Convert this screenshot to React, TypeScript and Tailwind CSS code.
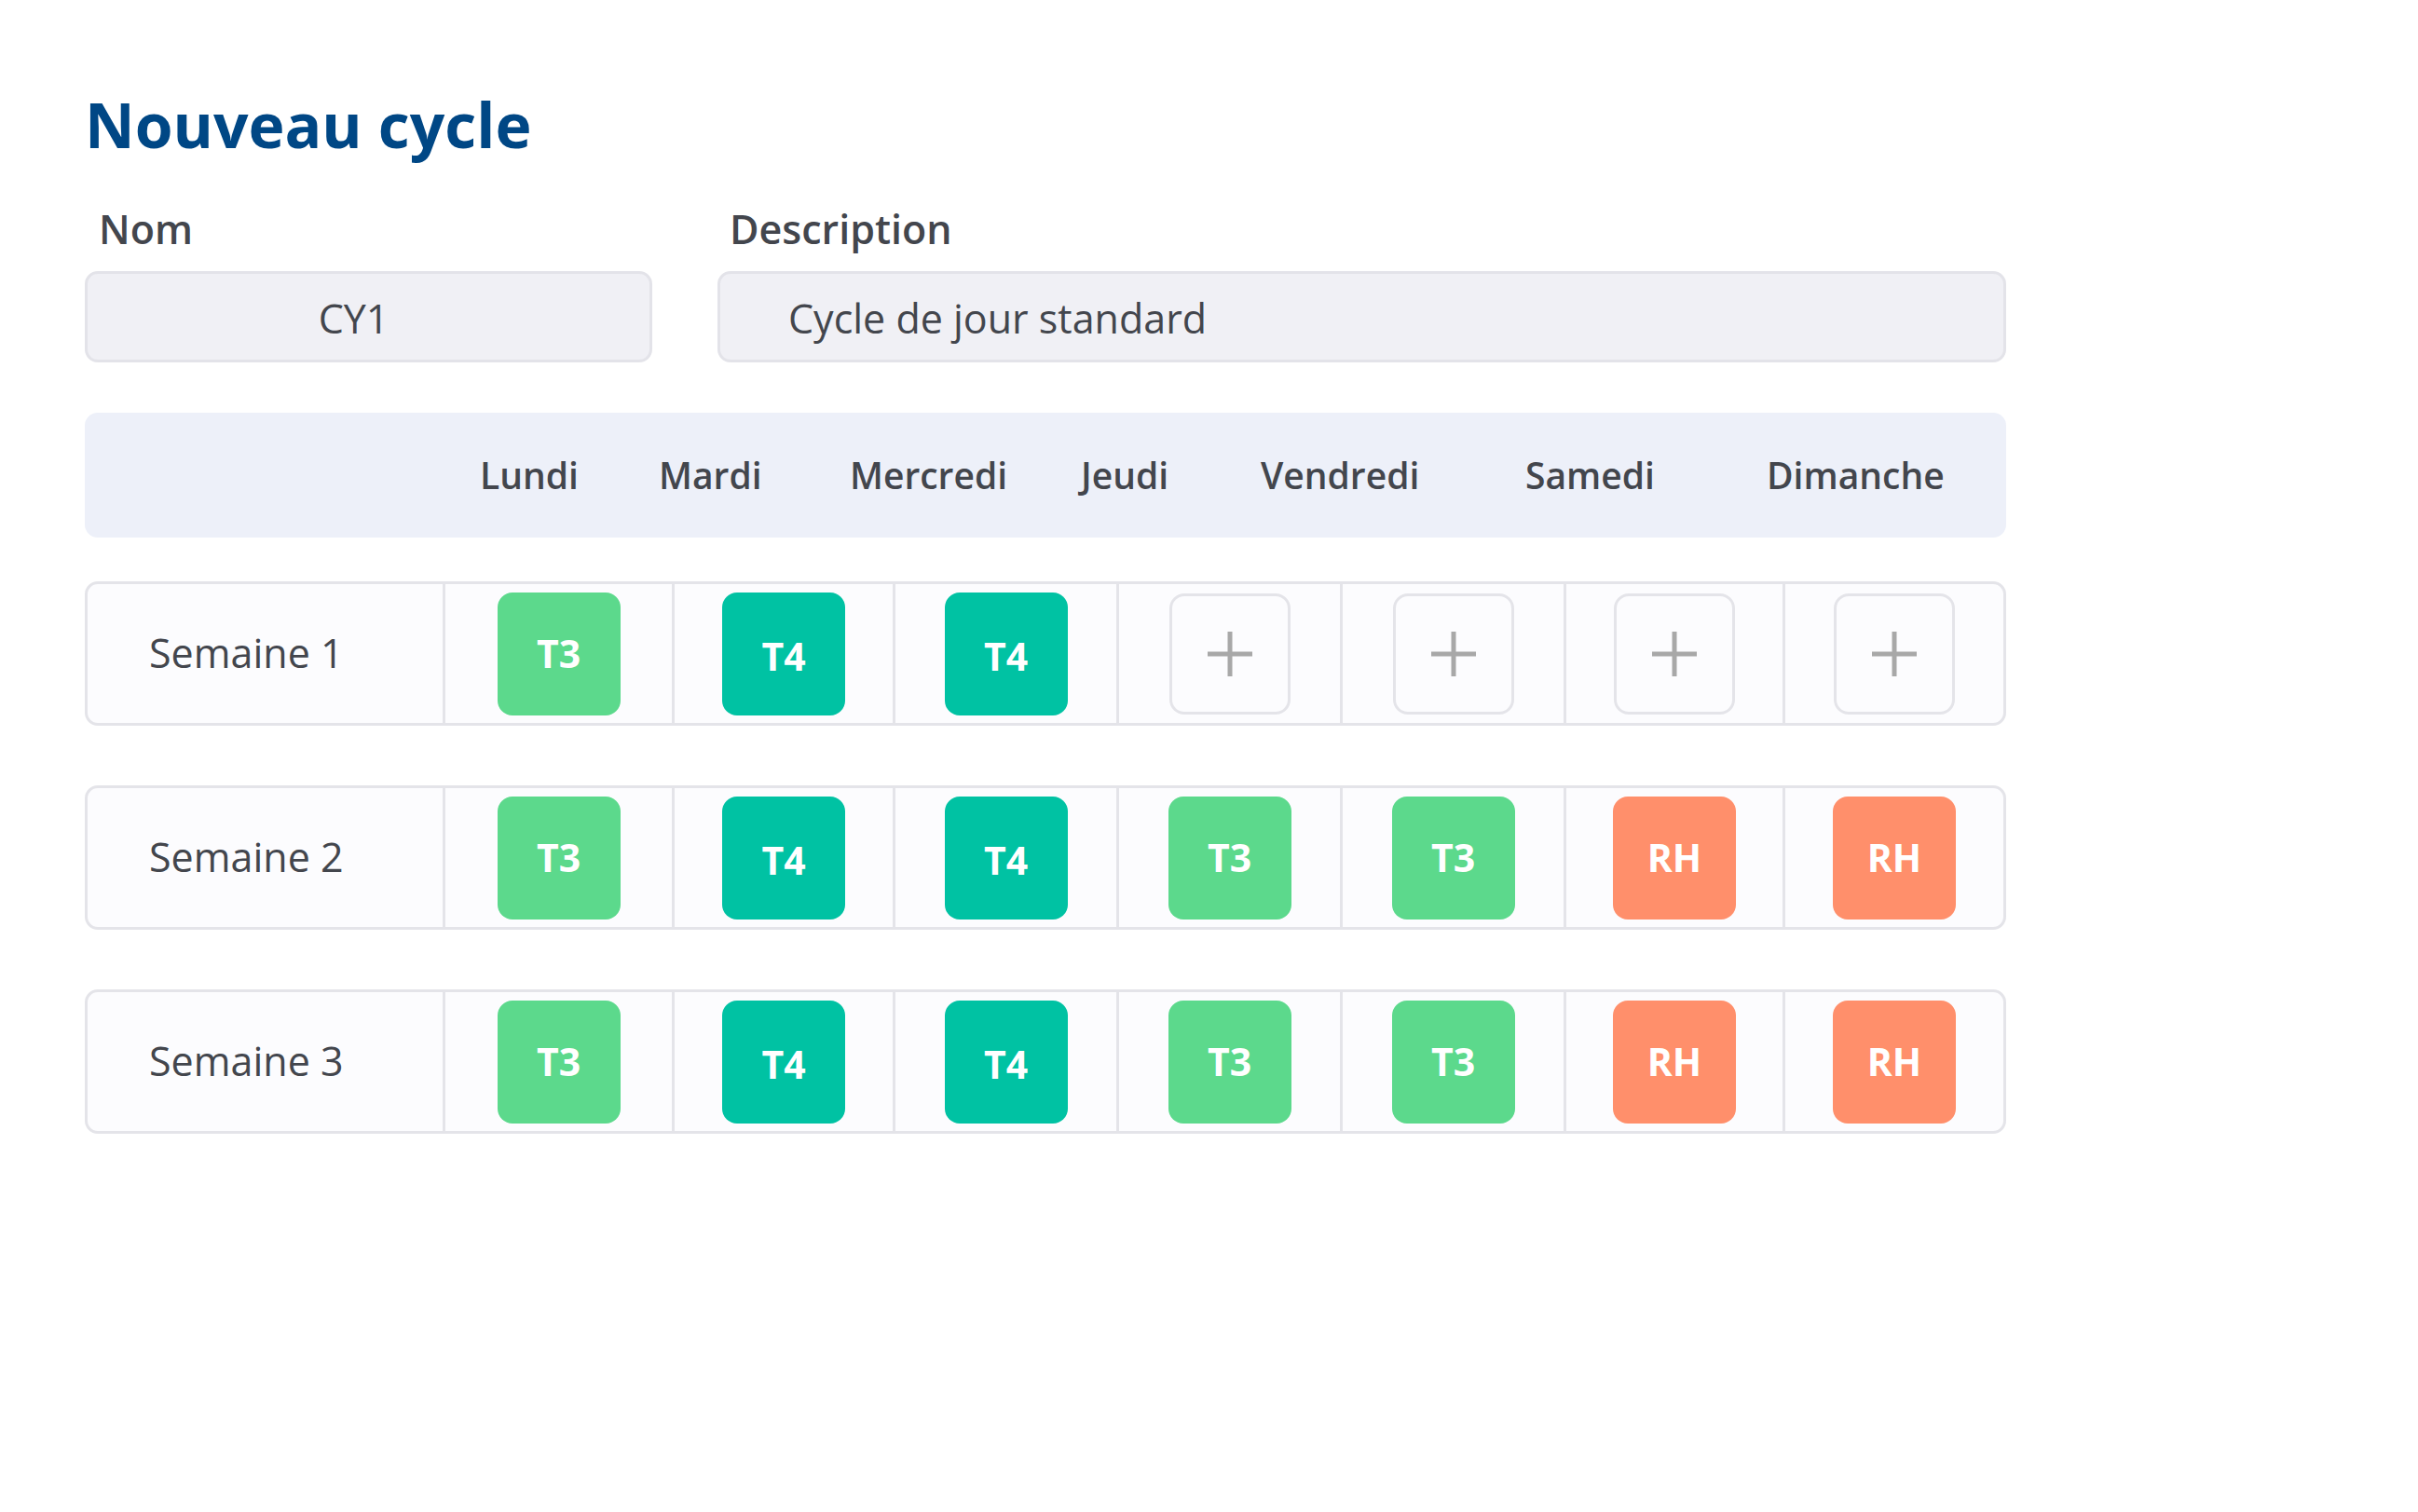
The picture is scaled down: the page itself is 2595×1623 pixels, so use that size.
import React from 'react';

type Shift = 'T3' | 'T4' | 'RH' | null;

const days = ['Lundi', 'Mardi', 'Mercredi', 'Jeudi', 'Vendredi', 'Samedi', 'Dimanche'];

const weeks: { label: string; shifts: Shift[] }[] = [
  { label: 'Semaine 1', shifts: ['T3', 'T4', 'T4', null, null, null, null] },
  { label: 'Semaine 2', shifts: ['T3', 'T4', 'T4', 'T3', 'T3', 'RH', 'RH'] },
  { label: 'Semaine 3', shifts: ['T3', 'T4', 'T4', 'T3', 'T3', 'RH', 'RH'] },
];

function Chip({ shift }: { shift: Shift }) {
  if (!shift) {
    return (
      <button className="w-[130px] h-[130px] rounded-[16px] border-[3px] border-[#e4e4e9] bg-[#fcfcfe] flex items-center justify-center">
        <svg width="48" height="48" viewBox="0 0 48 48">
          <rect x="0" y="21.5" width="48" height="5" fill="#a8a8a8" />
          <rect x="21.5" y="0" width="5" height="48" fill="#a8a8a8" />
        </svg>
      </button>
    );
  }
  const color = shift === 'T3' ? 'bg-[#5cd98c]' : shift === 'T4' ? 'bg-[#00c2a3]' : 'bg-[#ff8f6b]';
  return (
    <div className={`w-[132px] h-[132px] rounded-[16px] ${color} flex items-center justify-center text-white font-bold text-[41px] leading-none ${shift === 'T4' ? 'pt-[6px]' : ''}`}>
      {shift}
    </div>
  );
}

export default function App() {
  return (
    <div className="min-h-screen bg-white pl-[91px] pt-[100px] text-[#43464d]" style={{ fontFamily: '"Open Sans", "Noto Sans", sans-serif' }}>
      <h1 className="text-[66px] font-bold leading-none text-[#004785]">Nouveau cycle</h1>

      <div className="mt-[58px] grid grid-cols-[609px_1383px] gap-x-[70px]">
        <div>
          <label className="block pl-[15px] text-[43px] font-semibold leading-none">Nom</label>
          <div className="mt-[24px] h-[98px] rounded-[14px] border-[3px] border-[#e3e3e9] bg-[#f0f0f5] flex items-center justify-center pr-[32px] pt-[4px] text-[43px]">
            CY1
          </div>
        </div>
        <div>
          <label className="block pl-[13px] text-[43px] font-semibold leading-none">Description</label>
          <div className="mt-[24px] h-[98px] rounded-[14px] border-[3px] border-[#e3e3e9] bg-[#f0f0f5] flex items-center pl-[73px] pt-[4px] text-[43px]">
            Cycle de jour standard
          </div>
        </div>
      </div>

      <div className="mt-[54px] w-[2062px] h-[134px] rounded-[14px] bg-[#edf0f9] grid grid-cols-[424px_192px_205px_248px_193px_284px_259px_1fr] items-center">
        <div />
        {days.map((d) => (
          <div key={d} className="text-[39px] font-semibold">{d}</div>
        ))}
      </div>

      <div className="mt-[47px] flex flex-col gap-[64px] w-[2062px]">
        {weeks.map((w) => (
          <div key={w.label} className="h-[155px] rounded-[14px] border-[3px] border-[#e4e4e9] bg-[#fcfcfe] grid grid-cols-[381px_246px_237px_240px_240px_240px_235px_1fr]">
            <div className="flex items-center pl-[66px] text-[43px]">{w.label}</div>
            {w.shifts.map((s, i) => (
              <div key={i} className="border-l-[3px] border-[#e4e4e9] flex items-center justify-center">
                <Chip shift={s} />
              </div>
            ))}
          </div>
        ))}
      </div>
    </div>
  );
}
